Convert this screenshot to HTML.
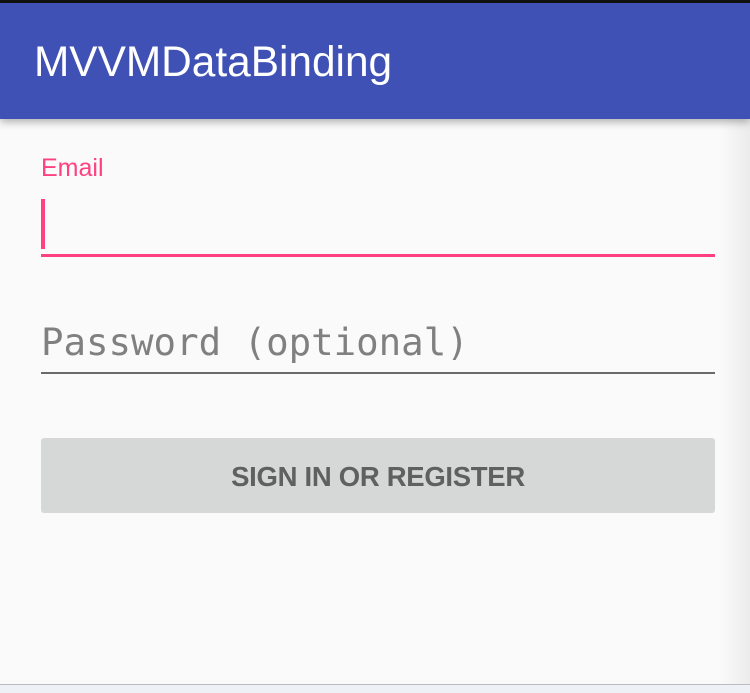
<!DOCTYPE html>
<html><head><style>
body{margin:0;width:750px;height:692px;background:#fafafa;position:relative;overflow:hidden;font-family:"Liberation Sans",sans-serif}
.top{position:absolute;left:0;top:0;width:750px;height:3px;background:#111}
.bar{position:absolute;left:0;top:3px;width:750px;height:116px;background:#3f51b5;box-shadow:0 3px 8px rgba(0,0,0,.3)}
.title{position:absolute;left:34px;top:38px;color:#fff;font-size:42.4px;line-height:48px}
.rs{position:absolute;right:0;top:119px;width:30px;height:566px;background:linear-gradient(90deg,rgba(0,0,0,0),rgba(0,0,0,.06))}
.lbl{position:absolute;left:41px;top:154px;font-size:25px;color:#ff4081}
.cur{position:absolute;left:41px;top:199px;width:4px;height:50px;background:#ff4081}
.ul1{position:absolute;left:41px;top:254px;width:674px;height:3px;background:#ff4081}
.ph{position:absolute;left:41px;top:319px;font-family:"DejaVu Sans Mono",monospace;font-size:37.4px;color:#808080;line-height:46px}
.ul2{position:absolute;left:41px;top:372px;width:674px;height:2px;background:#6a6a6a}
.btn{position:absolute;left:41px;top:438px;width:674px;height:75px;background:#d6d7d7;border-radius:3px;color:#5f605f;font-weight:bold;font-size:27.5px;text-align:center;line-height:77px;letter-spacing:-0.3px}
.bot{position:absolute;left:0;top:684px;width:750px;height:8px;background:#eef2f6;border-top:1px solid #bbb}
</style></head><body>
<div class="top"></div>
<div class="rs"></div>
<div class="bar"></div>
<div class="title">MVVMDataBinding</div>
<div class="lbl">Email</div>
<div class="cur"></div>
<div class="ul1"></div>
<div class="ph">Password (optional)</div>
<div class="ul2"></div>
<div class="btn">SIGN IN OR REGISTER</div>
<div class="bot"></div>
</body></html>
